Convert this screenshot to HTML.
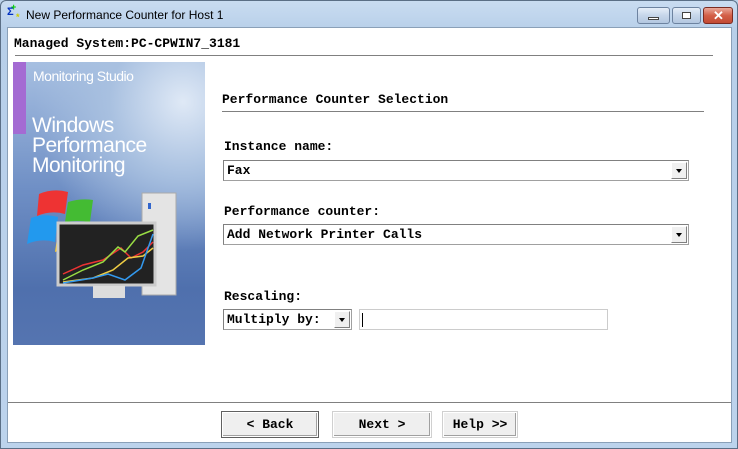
<!DOCTYPE html>
<html><head><meta charset="utf-8"><style>
*{margin:0;padding:0;box-sizing:border-box}
html,body{width:738px;height:449px;overflow:hidden;background:#bcd2ea}
.win{position:absolute;left:0;top:0;width:738px;height:449px;background:linear-gradient(#c9dcf1,#b7cfe9 30px,#bcd3ec);border:1px solid #5b6f86;border-radius:6px 6px 0 0}
.title{position:absolute;left:25px;top:7px;font:12px "Liberation Sans",sans-serif;color:#000}
.client{position:absolute;left:6px;top:26px;width:725px;height:416px;background:#fff;border:1px solid #8aa0b8}
.mono{font-family:"Liberation Mono",monospace;font-weight:bold;font-size:13px;color:#000;position:absolute;white-space:pre}
.hr{position:absolute;height:1px;background:#808080}
.combo{position:absolute;height:21px;border:1px solid #a0a0a0;border-top-color:#808080;border-left-color:#808080;background:#fff}
.combo .t{position:absolute;left:3px;top:2px}
.arr{position:absolute;right:1px;top:1px;width:16px;height:17px;background:#f0f0f0;border:1px solid #fff;border-right-color:#808080;border-bottom-color:#808080}
.arr:after{content:"";position:absolute;left:4px;top:6px;border-left:3px solid transparent;border-right:3px solid transparent;border-top:4px solid #000}
.btn{position:absolute;top:411px;height:25px;background:#efefef;border:1px solid #fff;box-shadow:1px 1px 0 #404040,inset -1px -1px 0 #a0a0a0;outline:1px solid #d0d0d0}
.btn span{position:absolute;left:0;right:0;top:4px;text-align:center}
.wb{position:absolute;top:6px;height:17px;border:1px solid #6d83a0;border-radius:3px;background:linear-gradient(#e6eef8,#c6d6ea 50%,#b3c7e0)}
</style></head><body>
<div class="win">
 <div style="position:absolute;left:6px;top:5px;width:16px;height:16px;font:bold 11px 'Liberation Sans',sans-serif;color:#0030c0">Σ<span style="position:absolute;left:4px;top:-4px;color:#0c0;font-size:9px">+</span><span style="position:absolute;left:9px;top:6px;color:#cc0;font-size:9px">*</span></div>
 <div class="title">New Performance Counter for Host 1</div>
 <div class="wb" style="left:636px;width:33px"><div style="position:absolute;left:10px;top:9px;width:11px;height:3px;background:#fff;border:1px solid #444"></div></div>
 <div class="wb" style="left:671px;width:29px"><div style="position:absolute;left:9px;top:4px;width:9px;height:7px;border:1px solid #444;background:#fff"></div></div>
 <div class="wb" style="left:702px;width:30px;border-color:#7a2b22;background:linear-gradient(#e9a99a,#d35f48 50%,#c24a33)"><div style="position:absolute;left:9px;top:0px;color:#fff;font:bold 13px 'Liberation Sans',sans-serif">✕</div></div>
 <div class="client">
  <div class="mono" style="left:6px;top:8px">Managed System:PC-CPWIN7_3181</div>
  <div class="hr" style="left:7px;top:27px;width:698px"></div>
  <div style="position:absolute;left:5px;top:34px;width:192px;height:283px;background:radial-gradient(circle at 170px 40px,#dfe9f6 0,#a8c0e0 25%,transparent 50%),linear-gradient(#a6bfe1,#6f8fc5 45%,#4f70ad 80%,#5574b0);overflow:hidden">
   <div style="position:absolute;left:0;top:0;width:13px;height:72px;background:#a46bd3"></div>
   <div style="position:absolute;left:20px;top:6px;color:#fff;font:14px 'Liberation Sans',sans-serif;letter-spacing:-0.5px">Monitoring Studio</div>
   <div style="position:absolute;left:19px;top:54px;color:#fff;font:21px/20px 'Liberation Sans',sans-serif;letter-spacing:-0.5px">Windows<br>Performance<br>Monitoring</div>
   <svg width="192" height="283" style="position:absolute;left:0;top:0">
    <rect x="129" y="131" width="34" height="102" fill="#e4e4e4" stroke="#aaa"/>
    <rect x="135" y="141" width="3" height="6" fill="#36c"/>
    <path d="M26 132 Q40 126 55 130 L52 152 Q38 148 24 154Z" fill="#e33"/>
    <path d="M55 140 Q68 136 80 138 L77 160 Q64 158 52 160Z" fill="#4b3"/>
    <path d="M18 156 Q30 151 45 155 L42 180 Q28 176 14 182Z" fill="#29e"/>
    <path d="M46 162 Q60 158 73 162 L70 188 Q56 184 42 190Z" fill="#fc2"/>
    <rect x="45" y="161" width="97" height="62" fill="#222" stroke="#ccc" stroke-width="3"/>
    <rect x="80" y="224" width="32" height="12" fill="#ddd"/>
    <polyline points="50,212 70,203 90,198 108,186 118,196 130,190 140,180" fill="none" stroke="#e33" stroke-width="1.5"/>
    <polyline points="50,218 70,208 90,200 105,185 112,190 125,174 140,168" fill="none" stroke="#9d4" stroke-width="1.5"/>
    <polyline points="50,220 80,216 100,208 115,196 130,194 140,186" fill="none" stroke="#ec4" stroke-width="1.5"/>
    <polyline points="50,221 80,216 95,212 112,218 128,206 140,172" fill="none" stroke="#39e" stroke-width="1.5"/>
   </svg>
  </div>
  <div class="mono" style="left:214px;top:64px">Performance Counter Selection</div>
  <div class="hr" style="left:214px;top:83px;width:482px"></div>
  <div class="mono" style="left:216px;top:111px">Instance name:</div>
  <div class="combo" style="left:215px;top:132px;width:466px"><div class="mono t">Fax</div><div class="arr"></div></div>
  <div class="mono" style="left:216px;top:176px">Performance counter:</div>
  <div class="combo" style="left:215px;top:196px;width:466px"><div class="mono t">Add Network Printer Calls</div><div class="arr"></div></div>
  <div class="mono" style="left:216px;top:261px">Rescaling:</div>
  <div class="combo" style="left:215px;top:281px;width:129px"><div class="mono t">Multiply by:</div><div class="arr"></div></div>
  <div class="combo" style="left:351px;top:281px;width:249px;border-color:#ccc"><div style="position:absolute;left:2px;top:3px;width:1px;height:14px;background:#000"></div></div>
  <div class="hr" style="left:0;top:374px;width:723px"></div>
 </div>
 <div class="btn" style="left:221px;width:96px;outline:1px solid #606060"><span class="mono" style="position:absolute">&lt; Back</span></div>
 <div class="btn" style="left:332px;width:98px"><span class="mono" style="position:absolute">Next &gt;</span></div>
 <div class="btn" style="left:442px;width:74px"><span class="mono" style="position:absolute">Help &gt;&gt;</span></div>
</div>
</body></html>
